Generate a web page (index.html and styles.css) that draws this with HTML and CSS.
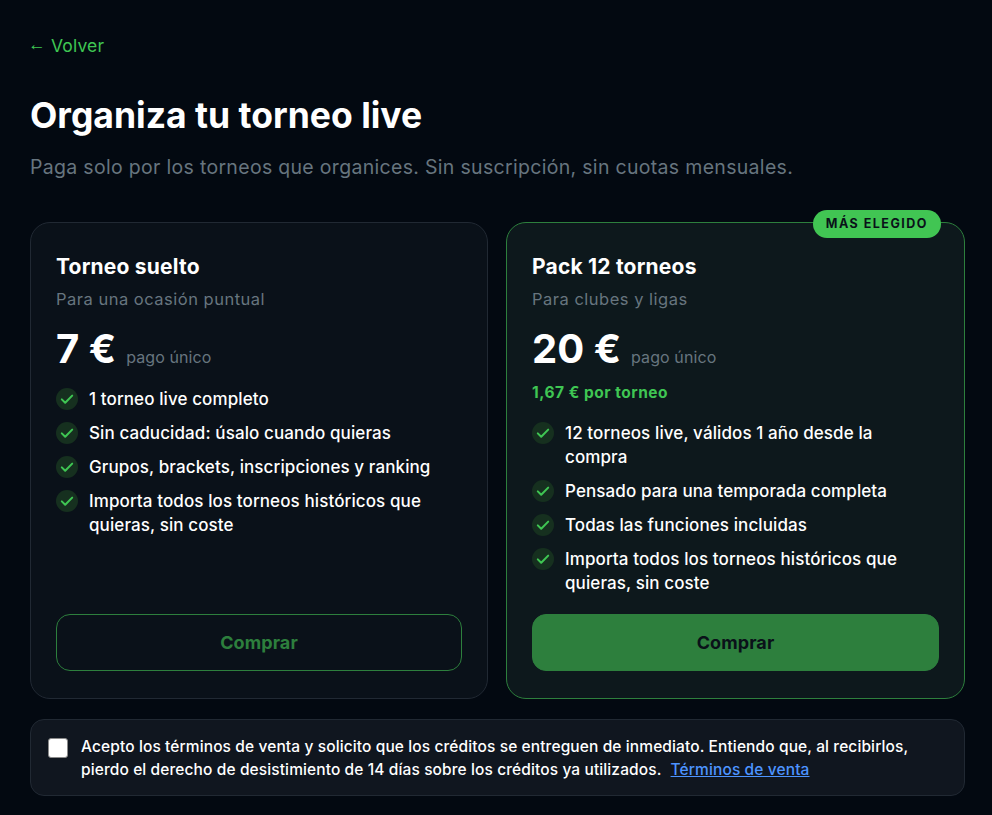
FILE: index.html
```html
<!DOCTYPE html>
<html lang="es">
<head>
    <meta charset="utf-8">
    <title>Organiza tu torneo live</title>
    <link rel="stylesheet" href="styles.css">
</head>
<body>
<main class="page">
    <a class="back" href="#"><span class="arrow">←</span>Volver</a>
    <h1>Organiza tu torneo live</h1>
    <p class="lead">Paga solo por los torneos que organices. Sin suscripción, sin cuotas mensuales.</p>

    <div class="plans">
        <section class="plan">
            <h2>Torneo suelto</h2>
            <p class="plan-sub">Para una ocasión puntual</p>
            <div class="price"><strong>7 €</strong> <span>pago único</span></div>
            <ul class="features">
                <li><svg class="check" viewBox="0 0 22 22"><circle cx="11" cy="11" r="11"/><path d="M5.8 11.4l3.4 3.4 7-7.2"/></svg>1 torneo live completo</li>
                <li><svg class="check" viewBox="0 0 22 22"><circle cx="11" cy="11" r="11"/><path d="M5.8 11.4l3.4 3.4 7-7.2"/></svg>Sin caducidad: úsalo cuando quieras</li>
                <li><svg class="check" viewBox="0 0 22 22"><circle cx="11" cy="11" r="11"/><path d="M5.8 11.4l3.4 3.4 7-7.2"/></svg>Grupos, brackets, inscripciones y ranking</li>
                <li><svg class="check" viewBox="0 0 22 22"><circle cx="11" cy="11" r="11"/><path d="M5.8 11.4l3.4 3.4 7-7.2"/></svg>Importa todos los torneos históricos que quieras, sin coste</li>
            </ul>
            <button class="buy" type="button">Comprar</button>
        </section>

        <section class="plan plan-featured">
            <span class="badge">MÁS ELEGIDO</span>
            <h2>Pack 12 torneos</h2>
            <p class="plan-sub">Para clubes y ligas</p>
            <div class="price"><strong>20 €</strong> <span>pago único</span></div>
            <p class="per-unit">1,67 € por torneo</p>
            <ul class="features">
                <li><svg class="check" viewBox="0 0 22 22"><circle cx="11" cy="11" r="11"/><path d="M5.8 11.4l3.4 3.4 7-7.2"/></svg>12 torneos live, válidos 1 año desde la compra</li>
                <li><svg class="check" viewBox="0 0 22 22"><circle cx="11" cy="11" r="11"/><path d="M5.8 11.4l3.4 3.4 7-7.2"/></svg>Pensado para una temporada completa</li>
                <li><svg class="check" viewBox="0 0 22 22"><circle cx="11" cy="11" r="11"/><path d="M5.8 11.4l3.4 3.4 7-7.2"/></svg>Todas las funciones incluidas</li>
                <li><svg class="check" viewBox="0 0 22 22"><circle cx="11" cy="11" r="11"/><path d="M5.8 11.4l3.4 3.4 7-7.2"/></svg>Importa todos los torneos históricos que quieras, sin coste</li>
            </ul>
            <button class="buy buy-solid" type="button">Comprar</button>
        </section>
    </div>

    <label class="terms">
        <span class="box"></span>
        <span>Acepto los términos de venta y solicito que los créditos se entreguen de inmediato. Entiendo que, al recibirlos, pierdo el derecho de desistimiento de 14 días sobre los créditos ya utilizados. <a href="#">Términos de venta</a></span>
    </label>
</main>
</body>
</html>
```

FILE: styles.css
```css
* {
    box-sizing: border-box;
}
html, body {
    margin: 0;
    height: 815px;
    overflow: hidden;
}
body {
    background: #030911;
    color: #fff;
    font-family: Inter, "Open Sans", sans-serif;
}
.page {
    padding: 35px 27px 0 30px;
}
.back {
    display: flex;
    align-items: center;
    height: 22px;
    font-size: 17.5px;
    line-height: 22px;
    letter-spacing: 0.15px;
    color: #3fc653;
    text-decoration: none;
}
.arrow {
    width: 21px;
    margin-bottom: 4px;
    font-family: "Liberation Sans", sans-serif;
    text-indent: -2px;
}
h1 {
    margin: 36px 0 0;
    font-size: 35.5px;
    line-height: 46px;
    font-weight: 700;
}
.lead {
    margin: 15px 0 0;
    font-size: 19.5px;
    line-height: 26px;
    letter-spacing: 0.31px;
    color: #67757f;
}

/* Plans */
.plans {
    display: grid;
    grid-template-columns: 458px 459px;
    gap: 18px;
    margin-top: 42px;
}
.plan {
    position: relative;
    display: flex;
    flex-direction: column;
    height: 477px;
    padding: 30px 25px 27px;
    background: #0a1119;
    border: 1px solid #212933;
    border-radius: 20px;
}
.plan-featured {
    background: #0d181c;
    border-color: #2d7f3d;
}
.badge {
    position: absolute;
    top: -13px;
    right: 23px;
    height: 28px;
    padding: 0 13px;
    border-radius: 14px;
    background: #41c553;
    color: #0a1119;
    font-size: 12.5px;
    line-height: 28px;
    font-weight: 700;
    letter-spacing: 1.5px;
}
h2 {
    margin: 0;
    font-size: 21px;
    line-height: 28px;
    font-weight: 700;
    letter-spacing: 0.2px;
}
.plan-sub {
    margin: 8px 0 0;
    font-size: 16.5px;
    line-height: 20px;
    letter-spacing: 0.5px;
    color: #67757f;
}
.price {
    display: flex;
    align-items: baseline;
    gap: 10px;
    margin-top: 16px;
    height: 48px;
    line-height: 48px;
}
.price strong {
    font-size: 40px;
    font-weight: 700;
}
.price span {
    font-size: 16px;
    letter-spacing: 0.1px;
    color: #67757f;
}
.per-unit {
    margin: 10px 0 0;
    font-size: 15.5px;
    line-height: 20px;
    font-weight: 700;
    letter-spacing: 0.5px;
    color: #3fc653;
}
.features {
    list-style: none;
    margin: 14px 0 0;
    padding: 0;
    font-size: 17px;
    font-weight: 500;
    line-height: 24px;
    letter-spacing: 0.1px;
}
.plan-featured .features {
    margin-top: 18px;
}
.features li {
    position: relative;
    padding-left: 33px;
    margin-bottom: 10px;
}
.check {
    position: absolute;
    left: 0;
    top: 1px;
    width: 22px;
    height: 22px;
}
.check circle {
    fill: #16301f;
}
.check path {
    fill: none;
    stroke: #3fc653;
    stroke-width: 2;
    stroke-linecap: round;
    stroke-linejoin: round;
}
.buy {
    display: block;
    flex: none;
    width: 100%;
    height: 57px;
    margin-top: auto;
    border: 1px solid #2d7f3d;
    border-radius: 14px;
    background: transparent;
    color: #2d7f3d;
    font-family: inherit;
    font-size: 18px;
    font-weight: 700;
    letter-spacing: 0.1px;
}
.buy-solid {
    background: #2d7f3d;
    color: #0a1119;
}

/* Terms */
.terms {
    display: flex;
    align-items: flex-start;
    gap: 13px;
    margin-top: 20px;
    height: 77px;
    padding: 15px 17px;
    background: #10161f;
    border: 1px solid #212933;
    border-radius: 14px;
    font-size: 15.5px;
    font-weight: 500;
    line-height: 23px;
    letter-spacing: 0.11px;
}
.box {
    flex: none;
    width: 20px;
    height: 20px;
    margin-top: 3px;
    background: #fff;
    border: 1px solid #8a8a8a;
    border-radius: 3px;
}
.terms a {
    margin-left: 5px;
    color: #4d94ff;
}
```
